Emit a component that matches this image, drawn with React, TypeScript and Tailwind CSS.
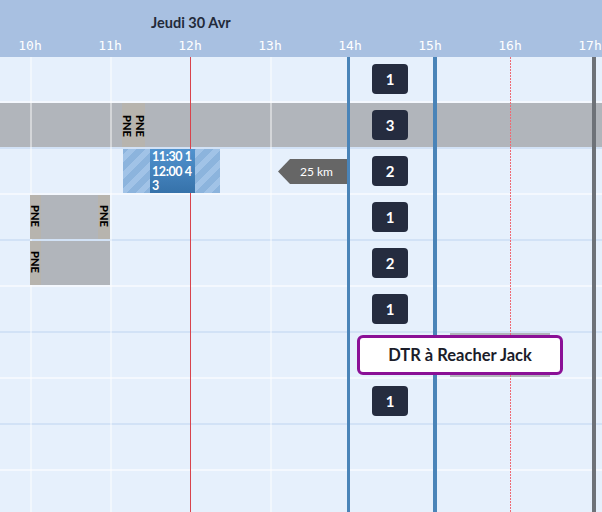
import React from "react";

// timeline: 10h sits at x=30, 80px per hour
const HOURS = ["10h", "11h", "12h", "13h", "14h", "15h", "16h", "17h"];

interface Row {
    badge?: string;
    gray?: boolean;
}

const rows: Row[] = [
    { badge: "1" },
    { badge: "3", gray: true },
    { badge: "2" },
    { badge: "1" },
    { badge: "2" },
    { badge: "1" },
    {},
    { badge: "1" },
    {},
    {},
];

const Pne = () => (
    <span className="[writing-mode:vertical-rl] text-[11px] font-black leading-none text-black">PNE</span>
);

const Badge = ({ label }: { label: string }) => (
    <div className="w-[36px] h-[30px] rounded-[4px] bg-[#252c3f] flex items-center justify-center text-white text-[15px] font-bold">
        {label}
    </div>
);

const RowContent = ({ i }: { i: number }) => {
    if (i === 1) {
        return (
            <div className="absolute left-[122px] top-0 h-[44px] w-[23px] bg-[#b7b4ae] flex items-start justify-center gap-[2px] pt-[12px]">
                <Pne />
                <Pne />
            </div>
        );
    }
    if (i === 2) {
        return (
            <>
                <div className="absolute z-10 left-[123px] top-0 h-[44px] w-[97px] bg-[repeating-linear-gradient(-45deg,#8cb4dd_0px,#8cb4dd_6px,#a1c3e7_6px,#a1c3e7_12px)]">
                    <div className="ml-[27px] w-[45px] h-full bg-gradient-to-b from-[#5193cf] to-[#3672aa] pl-[2px] pt-[1px] text-white text-[12.5px] font-bold leading-[14.5px] tracking-[-0.4px] whitespace-nowrap">
                        <div>11:30 1</div>
                        <div>12:00 4</div>
                        <div>3</div>
                    </div>
                </div>
                <div className="absolute left-[278px] top-[10px] h-[25px] w-[69px] bg-[#666666] [clip-path:polygon(0_50%,12px_0,100%_0,100%_100%,12px_100%)] flex items-center justify-center pl-[8px] text-white text-[12px]">
                    25 km
                </div>
            </>
        );
    }
    if (i === 3) {
        return (
            <div className="absolute z-10 left-[30px] top-0 h-[44px] w-[80px] bg-[#b1b5bb] flex justify-between">
                <div className="w-[11px] h-full bg-[#b7b4ae] flex justify-center pt-[10px]"><Pne /></div>
                <div className="w-[12px] h-full bg-[#b7b4ae] flex justify-center pt-[10px]"><Pne /></div>
            </div>
        );
    }
    if (i === 4) {
        return (
            <div className="absolute z-10 left-[30px] top-0 h-[44px] w-[80px] bg-[#b1b5bb] flex">
                <div className="w-[11px] h-full bg-[#b7b4ae] flex justify-center pt-[10px]"><Pne /></div>
            </div>
        );
    }
    if (i === 6) {
        return <div className="absolute left-[450px] top-0 h-[44px] w-[100px] bg-[#b1b5bb]" />;
    }
    return null;
};

export default function App() {
    return (
        <div className="w-[602px] h-[512px] overflow-hidden relative bg-[#e6f0fc] font-['Lato','Liberation_Sans',sans-serif]">
            {/* header */}
            <div className="h-[57px] bg-[#a8c0e1] flex flex-col pt-[14px]">
                <div className="pl-[151px] text-[14.5px] leading-[18px] font-bold text-[#232a3a]">Jeudi 30 Avr</div>
                <div className="flex -ml-[10px] mt-[6px]">
                    {HOURS.map((h) => (
                        <div key={h} className="w-[80px] shrink-0 text-center text-[13px] leading-[16px] text-white font-['DejaVu_Sans_Mono',monospace]">
                            {h}
                        </div>
                    ))}
                </div>
            </div>

            {/* rows */}
            <div className="flex flex-col">
                {rows.map((r, i) => (
                    <div
                        key={i}
                        className={`relative h-[46px] shrink-0 border-b-2 flex items-center pl-[372px] ${r.gray ? "bg-[#b1b5bb]" : "bg-[#e6f0fc]"} ${i % 2 === 0 ? "border-[#f4f8fe]" : "border-[#d2e2f6]"}`}
                    >
                        <RowContent i={i} />
                        {r.badge && <Badge label={r.badge} />}
                    </div>
                ))}
            </div>

            {/* grid lines */}
            <div className="absolute top-[57px] bottom-0 left-[30px] w-[2px] bg-white/45" />
            <div className="absolute top-[57px] bottom-0 left-[110px] w-[2px] bg-white/45" />
            <div className="absolute top-[57px] bottom-0 left-[270px] w-[2px] bg-white/45" />

            {/* markers */}
            <div className="absolute top-[57px] bottom-0 left-[190px] w-[1px] bg-[#d8434c]" />
            <div className="absolute top-[57px] bottom-0 left-[347px] w-[3px] bg-[#4a84b8]" />
            <div className="absolute top-[57px] bottom-0 left-[433px] w-[4px] bg-[#4a84b8]" />
            <div className="absolute top-[57px] bottom-0 left-[510px] w-[1px] bg-[repeating-linear-gradient(to_bottom,#ee6a74_0px,#ee6a74_2px,transparent_2px,transparent_3px)]" />
            <div className="absolute top-[57px] bottom-0 left-[592px] w-[4px] bg-[#6e7278]" />

            {/* tooltip */}
            <div className="absolute z-20 left-[357px] top-[335px] w-[206px] h-[40px] rounded-[6px] border-[3px] border-[#8b1096] bg-white flex items-center justify-center text-[16.5px] font-bold text-[#1b1d2a]">
                DTR à Reacher Jack
            </div>
        </div>
    );
}
